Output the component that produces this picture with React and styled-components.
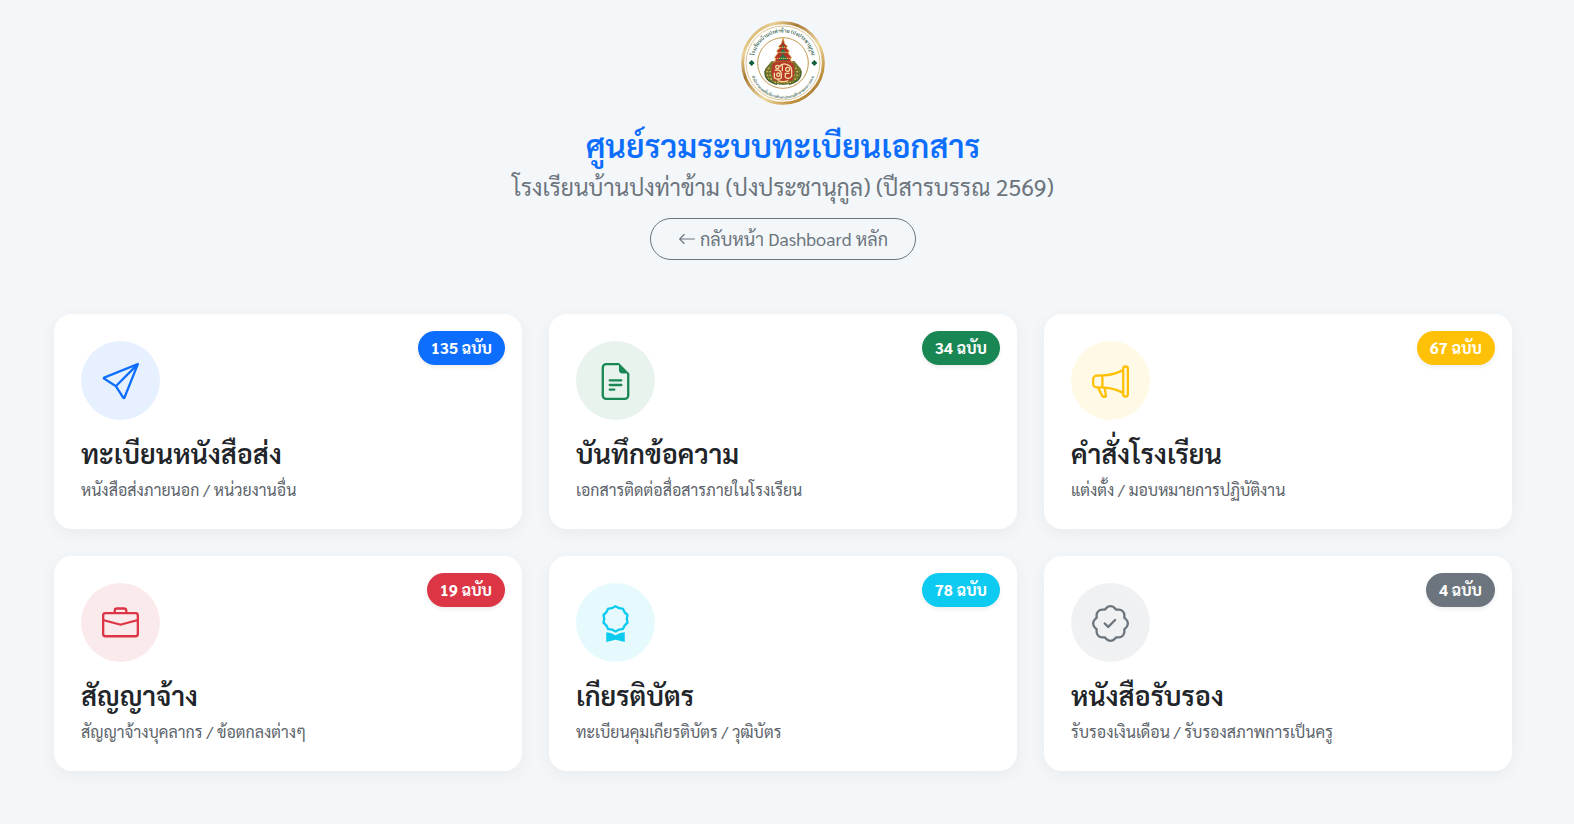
import React from "react";
import styled, { createGlobalStyle } from "styled-components";
import {
  BsArrowLeft,
  BsAward,
  BsBriefcase,
  BsFileEarmarkText,
  BsMegaphone,
  BsPatchCheck,
  BsSend,
} from "react-icons/bs";

const GlobalStyle = createGlobalStyle`
  *, *::before, *::after {
    box-sizing: border-box;
  }
  body {
    margin: 0;
    background: #f4f7fa;
    color: #212529;
    font-family: "Sarabun", "Noto Sans", sans-serif;
    font-size: 18px;
    line-height: 26px;
  }
`;

const Page = styled.main`
  padding: 18px 62px 54px 54px;
`;

const Header = styled.header`
  display: flex;
  flex-direction: column;
  align-items: center;
  margin-bottom: 54px;
  text-align: center;
`;

const Logo = styled.svg`
  width: 90px;
  height: 90px;
  margin-bottom: 18px;
`;

const Title = styled.h1`
  margin: 0 0 9px;
  color: #0d6efd;
  font-size: 32px;
  font-weight: 600;
  line-height: 38px;
`;

const School = styled.p`
  margin: 0 0 18px;
  color: #6c757d;
  font-size: 23px;
  line-height: 27px;
`;

const BackLink = styled.a`
  display: flex;
  align-items: center;
  gap: 4px;
  padding: 7px 27px;
  border: 1px solid #6c757d;
  border-radius: 50px;
  color: #6c757d;
  text-decoration: none;
`;

const Grid = styled.div`
  display: grid;
  grid-template-columns: repeat(3, 1fr);
  gap: 27px;
`;

const Card = styled.a`
  position: relative;
  display: block;
  padding: 27px;
  border-radius: 18px;
  background: #fff;
  box-shadow: 0 4px 17px rgba(0, 0, 0, 0.05);
  color: inherit;
  text-decoration: none;
`;

const Count = styled.span`
  position: absolute;
  top: 17px;
  right: 17px;
  padding: 4px 13px;
  border-radius: 50px;
  background: ${(props) => props.$color};
  box-shadow: 0 2px 4px rgba(0, 0, 0, 0.08);
  color: #fff;
  font-size: 16px;
  font-weight: 700;
`;

const IconCircle = styled.div`
  display: flex;
  align-items: center;
  justify-content: center;
  width: 79px;
  height: 79px;
  margin-bottom: 17px;
  padding-top: 2px;
  border-radius: 50%;
  background: ${(props) => props.$color}1a;
  color: ${(props) => props.$color};
  font-size: 37px;
`;

const CardTitle = styled.h2`
  margin: 0 0 9px;
  font-size: 27px;
  font-weight: 600;
  line-height: 32px;
`;

const CardText = styled.p`
  margin: 0;
  color: #5c636a;
  font-size: 16px;
  line-height: 24px;
`;

const registers = [
  {
    title: "ทะเบียนหนังสือส่ง",
    text: "หนังสือส่งภายนอก / หน่วยงานอื่น",
    count: 135,
    color: "#0d6efd",
    Icon: BsSend,
  },
  {
    title: "บันทึกข้อความ",
    text: "เอกสารติดต่อสื่อสารภายในโรงเรียน",
    count: 34,
    color: "#198754",
    Icon: BsFileEarmarkText,
  },
  {
    title: "คำสั่งโรงเรียน",
    text: "แต่งตั้ง / มอบหมายการปฏิบัติงาน",
    count: 67,
    color: "#ffc107",
    Icon: BsMegaphone,
  },
  {
    title: "สัญญาจ้าง",
    text: "สัญญาจ้างบุคลากร / ข้อตกลงต่างๆ",
    count: 19,
    color: "#dc3545",
    Icon: BsBriefcase,
  },
  {
    title: "เกียรติบัตร",
    text: "ทะเบียนคุมเกียรติบัตร / วุฒิบัตร",
    count: 78,
    color: "#0dcaf0",
    Icon: BsAward,
  },
  {
    title: "หนังสือรับรอง",
    text: "รับรองเงินเดือน / รับรองสภาพการเป็นครู",
    count: 4,
    color: "#6c757d",
    Icon: BsPatchCheck,
  },
];

const SchoolLogo = () => (
  <Logo viewBox="-135 -135 270 270" role="img" aria-label="ตราโรงเรียน">
    <defs>
      <linearGradient id="gold" x1="0" y1="0" x2="1" y2="1">
        <stop offset="0" stopColor="#c79a45" />
        <stop offset="0.2" stopColor="#e9cf92" />
        <stop offset="0.35" stopColor="#a87932" />
        <stop offset="0.6" stopColor="#f0dca6" />
        <stop offset="0.8" stopColor="#c2933f" />
        <stop offset="1" stopColor="#8a5e22" />
      </linearGradient>
      <path id="topArc" d="M -88 -4 A 88 88 0 0 1 88 -4" />
      <path id="bottomArc" d="M -99 8 A 99 99 0 0 0 99 8" />
    </defs>
    <circle r="121" fill="#fff" stroke="url(#gold)" strokeWidth="9" />
    <circle r="111" fill="none" stroke="#c9a560" strokeWidth="2" />
    <circle r="76" fill="none" stroke="#c39a50" strokeWidth="3" />
    <text fill="#2d5b45" fontSize="15" fontWeight="600" textAnchor="middle">
      <textPath href="#topArc" startOffset="50%">
        โรงเรียนบ้านปงท่าข้าม (ปงประชานุกูล)
      </textPath>
    </text>
    <text fill="#3c6650" fontSize="11" fontWeight="600" textAnchor="middle">
      <textPath href="#bottomArc" startOffset="50%">
        สำนักงานเขตพื้นที่การศึกษาประถมศึกษาพะเยา เขต ๒
      </textPath>
    </text>
    <path d="M-94 -9 l9 9 -9 9 -9 -9z M94 -9 l9 9 -9 9 -9 -9z" fill="#12603b" />

    {/* round base with the leaf pattern */}
    <path d="M-54 18 Q-58 62 0 66 Q58 62 54 18 L34 -6 H-34z" fill="#6f7731" />
    <path
      d="M-45 16 H45 M-50 26 H50 M-50 37 H50 M-47 48 H47 M-35 58 H35"
      stroke="#d9b74e"
      strokeWidth="4"
      strokeDasharray="5 4"
    />
    <path d="M-54 23 Q-57 55 -18 64 M54 23 Q57 55 18 64" fill="none" stroke="#3b5623" strokeWidth="4" />

    {/* spire */}
    <path
      d="M0 -76 L5 -58 13 -50 10 -45 19 -36 15 -30 25 -17 22 -9 33 2 H-33 L-22 -9 -25 -17 -15 -30 -19 -36 -10 -45 -13 -50 -5 -58z"
      fill="#b53425"
      stroke="#d8b04c"
      strokeWidth="2"
    />
    <path d="M0 -58 L4 -46 H-4z M0 -44 L9 -29 H-9z M0 -28 L15 -9 H-15z" fill="#277348" />
    <path
      d="M-10 -47 H10 M-17 -32 H17 M-24 -14 H24 M-30 -3 H30"
      stroke="#e8c25d"
      strokeWidth="3"
      strokeDasharray="4 2"
    />

    {/* monogram shield */}
    <path d="M-32 1 Q0 -10 32 1 Q39 29 29 51 Q0 64 -29 51 Q-39 29 -32 1z" fill="#b8382b" stroke="#8e5a26" strokeWidth="2" />
    <g fill="none" stroke="#f3dc9b" strokeWidth="4">
      <circle cx="-17" cy="12" r="5" />
      <circle cx="14" cy="19" r="6" />
      <circle cx="-14" cy="35" r="5" />
      <path d="M-12 12 Q-2 -1 10 4 Q26 9 26 22 V40 Q17 51 7 43 V31 H20 M-25 22 Q-7 18 -5 31 V45 Q-15 53 -26 44 V29 M-2 7 V24 M-16 53 Q0 59 16 53" />
    </g>
  </Logo>
);

const RegisterCard = ({ title, text, count, color, Icon }) => (
  <Card href="#">
    <Count $color={color}>{count} ฉบับ</Count>
    <IconCircle $color={color}>
      <Icon />
    </IconCircle>
    <CardTitle>{title}</CardTitle>
    <CardText>{text}</CardText>
  </Card>
);

const App = () => {
  return (
    <>
      <GlobalStyle />
      <Page>
        <Header>
          <SchoolLogo />
          <Title>ศูนย์รวมระบบทะเบียนเอกสาร</Title>
          <School>โรงเรียนบ้านปงท่าข้าม (ปงประชานุกูล) (ปีสารบรรณ 2569)</School>
          <BackLink href="#">
            <BsArrowLeft /> กลับหน้า Dashboard หลัก
          </BackLink>
        </Header>
        <Grid>
          {registers.map((item) => (
            <RegisterCard key={item.title} {...item} />
          ))}
        </Grid>
      </Page>
    </>
  );
};

export default App;
